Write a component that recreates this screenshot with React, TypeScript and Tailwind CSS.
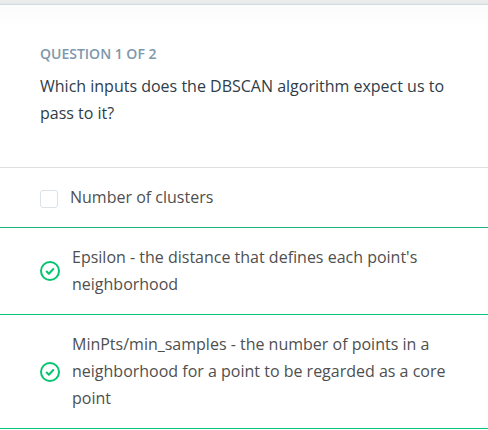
import React from "react";

function CheckIcon() {
  return (
    <svg className="block h-5 w-5 shrink-0" viewBox="0 0 20 20" fill="none" stroke="#06c46f" strokeWidth="2" strokeLinecap="round" strokeLinejoin="round">
      <circle cx="10" cy="10" r="9" />
      <path d="M6.7 10.5l2.2 2.3 4.4-4.8" />
    </svg>
  );
}

export default function App() {
  return (
    <div className="h-[430px] w-[488px] overflow-hidden bg-white text-[16px] leading-[27px] text-[#4f4f4f] [font-family:'Open_Sans',sans-serif]">
      <div className="h-[5px] border-b border-[#d2dce1] bg-linear-to-b from-[#eceeed] to-[#e4e8e8]" />
      <header className="h-[162px] bg-linear-to-b from-[#fbfbfb] to-white to-[24px] pl-10 pt-[38px]">
        <h2 className="h-[30px] text-[14px] leading-[22px] font-semibold text-[#7d97ad]">QUESTION 1 OF 2</h2>
        <p className="w-[420px] text-[#2e3d49]">Which inputs does the DBSCAN algorithm expect us to pass to it?</p>
      </header>
      <div className="flex h-[61px] items-center border-y border-t-[#dbdfe0] border-b-[#1cb57c] pl-10">
        <span className="mr-3 mt-0.5 h-[18px] w-[18px] rounded-[3px] border border-[#dbe2e8]" />
        <span>Number of clusters</span>
      </div>
      <div className="flex h-[87px] items-center border-b border-[#06c478] pl-10">
        <CheckIcon />
        <span className="ml-3 w-[390px]">Epsilon - the distance that defines each point's neighborhood</span>
      </div>
      <div className="flex h-[114px] items-center border-b border-[#06c478] pl-10">
        <CheckIcon />
        <span className="ml-3 w-[390px]">MinPts/min_samples - the number of points in a neighborhood for a point to be regarded as a core point</span>
      </div>
    </div>
  );
}
